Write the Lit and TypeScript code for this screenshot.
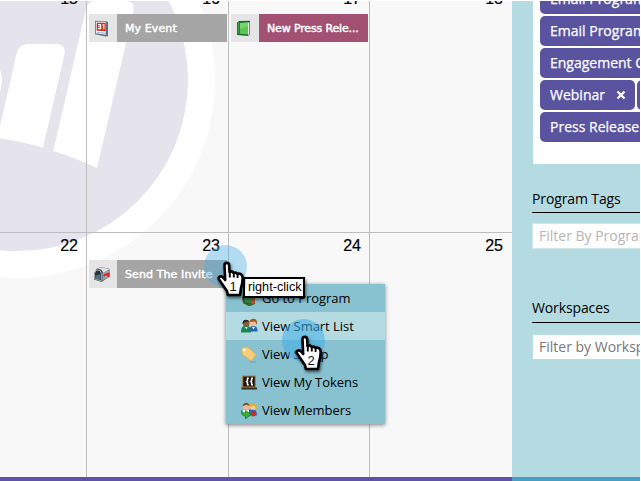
import { LitElement, html, svg, css } from "lit";
import { customElement, property } from "lit/decorators.js";

const icons: Record<string, unknown> = {
  event: svg`
    <path d="M1 .8L12.500 1.200 14 2v14.300l-2.500.2L1 14.300z" fill="#5f6e7d"/>
    <path d="M1.800 1.800h10v13l-10-1.500z" fill="#f4f8fb"/>
    <path d="M2.700 2.800h9v8.500l-9-.6z" fill="#d4301f"/>
    <path d="M4 4.700h2.600v4H4M4.500 6.700h2M8.600 5.200l1.200-.6v4.600" fill="none" stroke="#fff" stroke-width="1.200"/>
    <path d="M2.700 11.800l9 .8v1.400l-9-1.200z" fill="#9fc4e8"/>`,
  book: svg`
    <path d="M1 2.500L3 1l11-.2v13.400L12 16l-11-1z" fill="#1d6b2c"/>
    <path d="M12 3l1.300-1v12.500L12 15z" fill="#e8eee4"/>
    <path d="M4 3l8-.4v12L4 13.700z" fill="#5bc455"/>
    <path d="M4 3l8-.4v4L4 9z" fill="#7ad46c"/>
    <path d="M1.600 2.800L3.400 2v12l-1.800-.3z" fill="#3f9a45"/>`,
  mailbox: svg`
    <path d="M0 7L3 2.500 8 1l7.500 2v7.500L7.500 16 0 13.500z" fill="#4c545c"/>
    <path d="M3.500 2.500L8.500 1.300l7 2L9.500 7 7.500 3.800z" fill="#dde2e5"/>
    <path d="M.6 7.500C1.500 3 6.500 3 7.300 7.500v7.300L.6 12.700z" fill="#22323c" stroke="#bcc5cb" stroke-width=".8"/>
    <path d="M1.500 9.500l5-1.200v5.400l-5-1.200z" fill="#54707e"/>
    <path d="M8.500 7L15.500 4v6.500l-7 4z" fill="#9ba5ac"/>
    <path d="M9.500 8.500l6-2.200v4.500l-2 .8V9.200L9.500 10.500z" fill="#e02020"/>`,
  home: svg`
    <path d="M1 7l6-5 9 4-2 2v6l-6 2-6-3z" fill="#4c3421"/>
    <path d="M3 8l4-3 5 3-3 5-5-1z" fill="#2c9b45"/>
    <path d="M10 9l4-1v5l-4 2z" fill="#b65a36"/>
    <path d="M2 10l5 4 3-2 2 3-4 1-6-3z" fill="#2f6e32"/>`,
  people: svg`
    <path d="M0 14.500c0-5 1.500-7 5-7s5 2 5 7z" fill="#178a52"/>
    <path d="M8.500 13.500c0-4 1-5.500 4-5.500s4 2 4 5.500z" fill="#2465a8"/>
    <circle cx="5.200" cy="5.500" r="3.300" fill="#8c5a3c"/>
    <path d="M1.500 6C1 1 7 .5 8.500 4L5 3.500z" fill="#2c211c"/>
    <circle cx="12" cy="5" r="3.300" fill="#f0bd91"/>
    <path d="M8.700 4c0-4 7-4.500 7.300 0v3l-2-3.500z" fill="#9a5a25"/>
    <path d="M11 9l1.500 2.500L14 9zM4 9l1.300 2.500L6.600 9z" fill="#e8f1f5"/>`,
  tag: svg`
    <path d="M.5 1.500L7 1l8 7.500-5 6.500L1 8z" fill="#f7cd77" stroke="#dca64c" stroke-width=".7"/>
    <circle cx="3.400" cy="4" r="1.300" fill="#fff"/>
    <path d="M9 16h6" stroke="#71979e" stroke-width=".8"/>`,
  tokens: svg`
    <path d="M1 1.500h14v12l1 2H.5z" fill="#a58449"/>
    <path d="M2.300 2.600h11.400v9.900H2.300z" fill="#14130f"/>
    <path d="M7.800 4.300H6.500v2.200L5.500 7.500l1 1v2.200h1.300M12 4.300h-1.300v2.200l-1 1 1 1v2.200H12" fill="none" stroke="#fff" stroke-width="1.500"/>
    <path d="M.5 13.500h15.500v2H.5z" fill="#40301c"/>`,
  members: svg`
    <path d="M6 13.500c0-5 1-6 5-6s5 2 5 6z" fill="#2f62b4"/>
    <path d="M2 8h6v5H2z" fill="#e7ecef"/>
    <circle cx="5" cy="4.500" r="3.300" fill="#efbd8e"/>
    <path d="M1.500 4.500C2-.5 8-.5 8.500 4L5 2.800z" fill="#805328"/>
    <circle cx="12" cy="4.800" r="3" fill="#f5cf9d"/>
    <path d="M8.800 5C8.500-.3 15.700-.3 15.700 5v3.500l-2.200-4.500z" fill="#e4ae31"/>
    <path d="M10.500 10l4-1.500V14l-4 .5z" fill="#c92c2a"/>
    <path d="M.3 8.500q1 3 4.200 2.600V8.500l5.500 4-5.500 4.300v-2.800Q0 14 .3 8.500z" fill="#38b52f" stroke="#16721b" stroke-width=".7"/>`,
};

@customElement("glyph-icon")
export class GlyphIcon extends LitElement {
  @property() name = "";
  static styles = css`
    :host { display: block; width: 17px; height: 17px; flex: none; }
    svg { display: block; width: 17px; height: 17px; }
  `;
  render() {
    return html`<svg viewBox="0 0 17 17">${icons[this.name]}</svg>`;
  }
}

@customElement("hand-pointer")
export class HandPointer extends LitElement {
  @property() step = "";
  static styles = css`
    :host { display: block; position: relative; width: 44px; height: 60px; }
    .halo { position: absolute; left: 0; top: 0; width: 43px; height: 43px; border-radius: 50%; background: #40ade8; opacity: var(--halo, 0.38); }
    svg { position: absolute; left: 12px; top: 15px; overflow: visible; filter: drop-shadow(1px 2px 1.500px rgba(0, 0, 0, 0.55)); }
    .step { position: absolute; left: 19px; top: 34px; width: 20px; text-align: center; font: 13px/16px "Liberation Sans", Arial, sans-serif; color: #111; }
  `;
  render() {
    return html`<div class="halo"></div>
      <svg width="30" height="38" viewBox="0 0 30 38">
        <path d="M8.500 5.200Q8.500 2.900 10.800 2.900T13.100 5.200L13.500 12Q15.500 10.800 17 12.200L17.600 13Q20 11.800 21.400 13.800 23.200 12.900 25 14.300 27 15.800 26.600 18.800 26.600 24 25 28L24 35H11.800L11 31Q9 28.500 7.500 26L3 19.500Q2 17.100 4 16.400 6 16 7.500 18L9.200 20z" fill="#fff" stroke="#000" stroke-width="2.600" stroke-linejoin="round"/>
        <path d="M13.800 11.500V17.500M17.800 13V17.500M21.600 14V18" stroke="#000" stroke-width="1.900"/>
      </svg>
      <div class="step">${this.step}</div>`;
  }
}

@customElement("app-root")
export class AppRoot extends LitElement {
  static styles = css`
    :host { display: block; position: relative; width: 641px; height: 481px; overflow: hidden; background: #fff; }
    .page { display: flex; flex-direction: column; width: 640px; height: 480px; margin-top: 1px; overflow: hidden; }
    .body { display: flex; height: 476px; }
    .calendar { position: relative; width: 512px; height: 476px; background: #f8f8f8; overflow: hidden; }
    .watermark { position: absolute; left: 0; top: -1px; }
    .grid { position: relative; display: grid; grid-template-columns: 87px 142px 141px 142px; grid-template-rows: 231px 245px; }
    .cell { box-sizing: border-box; border-right: 1px solid #bdbdbd; position: relative; }
    .cell:nth-child(4n) { border-right: 0; }
    .week2 { border-top: 1px solid #bdbdbd; }
    .num { font: 16px/18px "Liberation Sans", Arial, sans-serif; -webkit-text-stroke: 0.2px #000; color: #000; text-align: right; padding-right: 8px; height: 18px; margin-top: 4px; }
    .cell:nth-child(4n) .num { padding-right: 9px; }
    .week1 .num { margin-top: -11px; }
    .event { display: flex; height: 28px; margin: 5px 1px 0 2px; }
    .week1 .event { margin-top: 6px; }
    .thumb { width: 28px; box-sizing: border-box; padding-left: 5px; background: #e5e5e5; display: flex; align-items: center; flex: none; }
    .label { flex: 1; background: #a5a5a5; color: #fff; font: 11px/30px "DejaVu Sans", Verdana, sans-serif; -webkit-text-stroke: 0.45px #fff; letter-spacing: 0.1px; padding-left: 8px; white-space: nowrap; overflow: hidden; }
    .press { background: #a35173; letter-spacing: -0.15px; }
    .side { position: relative; width: 128px; background: #b4dbe1; overflow: hidden; font: 14px/20px "Open Sans", "Noto Sans", sans-serif; }
    .panel { margin-left: 21px; height: 163px; background: #fff; overflow: hidden; }
    .tags { display: flex; flex-direction: column; gap: 2px; margin: -17px 0 0 7px; width: 200px; }
    .line { display: flex; gap: 2px; }
    .tag { height: 30px; line-height: 29px; box-sizing: border-box; padding: 0 10px; border-radius: 5px; background: #5a54a0; color: #fff; -webkit-text-stroke: 0.25px #fff; white-space: nowrap; }
    .wide { width: 180px; }
    .webinar { width: 95px; display: flex; align-items: flex-start; justify-content: space-between; padding-right: 9px; }
    .webinar svg { margin-top: 10px; }
    .heading { margin: 25px 0 0 20px; height: 23px; border-bottom: 1px solid #000; color: #000; letter-spacing: -0.12px; white-space: nowrap; }
    .second { margin-top: 49px; height: 24px; }
    .field { margin: 10px 0 0 20px; width: 180px; height: 26px; box-sizing: border-box; border: 1px solid #d0e6e7; padding-left: 6px; line-height: 24px; background: #fff; color: #b5b5b5; white-space: nowrap; }
    .dark { color: #777; border-color: #b9dce0; margin-top: 11px; }
    .foot { height: 4px; flex: none; display: flex; background: linear-gradient(to right, #5d55a4 512px, #4a9dc0 512px); }
    .menu { position: absolute; left: 226px; top: 284px; width: 159px; height: 140px; background: #88c1cf; box-shadow: 0 1px 4px rgba(0, 0, 0, 0.5); }
    .item { display: flex; align-items: center; gap: 4px; height: 28px; padding-left: 15px; font: 13px/28px "Open Sans", "Noto Sans", sans-serif; letter-spacing: -0.04px; color: #000; white-space: nowrap; }
    .active { background: #b4dbe1; }
    .one, .two { position: absolute; }
    .one { left: 204px; top: 245px; }
    .two { left: 282px; top: 319px; --halo: 0.55; }
    .tip { position: absolute; left: 243px; top: 277px; width: 62px; height: 21px; box-sizing: border-box; background: #fff; border: 2px solid #000; font: 12.7px/17px "Liberation Sans", Arial, sans-serif; color: #000; padding-left: 3px; white-space: nowrap; box-shadow: 1px 2px 3px rgba(0, 0, 0, 0.5); }
  `;

  private cell(week: number, day: string, icon = "", label = "", tone = "") {
    return html`<div class="cell week${week}">
      <div class="num">${day}</div>
      ${label
        ? html`<div class="event">
            <div class="thumb"><glyph-icon name=${icon}></glyph-icon></div>
            <div class="label ${tone}">${label}</div>
          </div>`
        : ""}
    </div>`;
  }

  render() {
    const menu = [
      ["home", "Go to Program"],
      ["people", "View Smart List"],
      ["tag", "View Setup"],
      ["tokens", "View My Tokens"],
      ["members", "View Members"],
    ];
    return html`
      <div class="page">
        <div class="body">
          <div class="calendar">
            <svg class="watermark" width="230" height="290" viewBox="0 0 230 290">
              <circle cx="17" cy="80" r="198" fill="#fff"/>
              <circle cx="17" cy="80" r="171" fill="#e5e4ed"/>
              <path d="M0 70Q4 78 0 92z" fill="#fff"/>
              <path d="M0 126L16.500 54Q19 44 28 44H56Q66 44 64.500 54L43 147.700Q20 141 0 138.500z" fill="#fff"/>
              <path d="M53.300 151L86 9Q88 1 96 1H126Q135 1 133.500 11L97 168Q76 158 53.300 151z" fill="#fff"/>
            </svg>
            <div class="grid">
              ${this.cell(1, "15")}
              ${this.cell(1, "16", "event", "My Event")}
              ${this.cell(1, "17", "book", "New Press Rele...", "press")}
              ${this.cell(1, "18")}
              ${this.cell(2, "22")}
              ${this.cell(2, "23", "mailbox", "Send The Invite")}
              ${this.cell(2, "24")}
              ${this.cell(2, "25")}
            </div>
          </div>
          <div class="side">
            <div class="panel">
              <div class="tags">
                <div class="tag wide">Email Program</div>
                <div class="tag wide">Email Program</div>
                <div class="tag wide">Engagement Content</div>
                <div class="line">
                  <div class="tag webinar">
                    <span>Webinar</span>
                    <svg width="10" height="10" viewBox="0 0 10 10"><path d="M1.500 1.500l7 7M8.500 1.500l-7 7" stroke="#fff" stroke-width="2.200"/></svg>
                  </div>
                  <div class="tag">Event</div>
                </div>
                <div class="tag wide">Press Release</div>
              </div>
            </div>
            <div class="heading">Program Tags</div>
            <div class="field">Filter By Program Tag</div>
            <div class="heading second">Workspaces</div>
            <div class="field dark">Filter by Workspace</div>
          </div>
        </div>
        <div class="foot"></div>
      </div>
      <div class="menu">
        ${menu.map(([icon, text], i) => html`<div class="item ${i === 1 ? "active" : ""}"><glyph-icon name=${icon}></glyph-icon>${text}</div>`)}
      </div>
      <hand-pointer class="two" step="2"></hand-pointer>
      <div class="tip">right-click</div>
      <hand-pointer class="one" step="1"></hand-pointer>
    `;
  }
}
